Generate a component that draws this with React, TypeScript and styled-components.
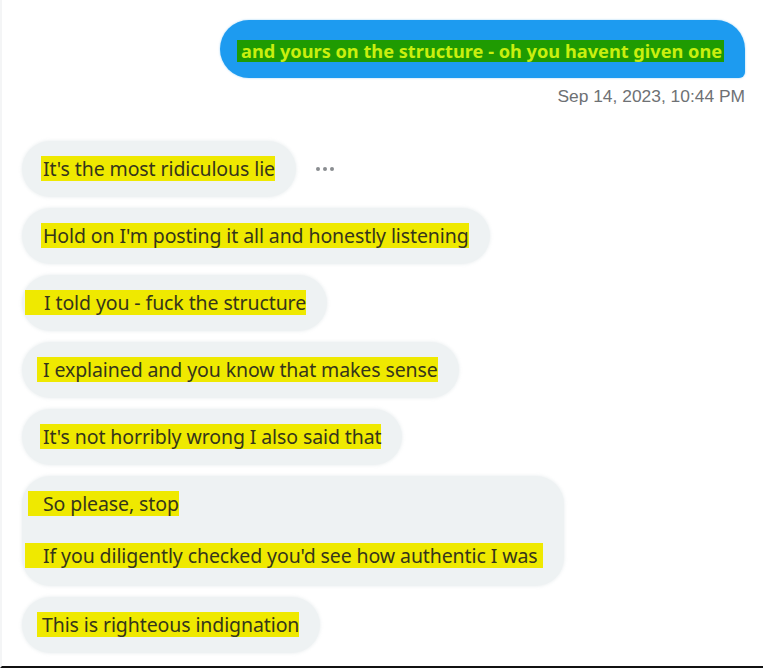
import React from "react";
import styled, { createGlobalStyle } from "styled-components";

const Global = createGlobalStyle`
  html, body { margin: 0; padding: 0; background: #ffffff; }
  body { font-family: "Noto Sans", "Liberation Sans", Arial, sans-serif; }
  * { box-sizing: border-box; }
`;

const Page = styled.div`
  width: 763px;
  height: 668px;
  background: #ffffff;
  border-left: 2px solid #f4f5f6;
  border-bottom: 2px solid #111111;
  display: flex;
  flex-direction: column;
  padding: 20px 18px 0 20px;
  overflow: hidden;
`;

const SentRow = styled.div`
  display: flex;
  justify-content: flex-end;
`;

const SentBubble = styled.div`
  background: #1d9bf0;
  border-radius: 29px 29px 6px 29px;
  padding: 20px 21px 16px 17px;
  height: 58px;
  width: 525px;
  box-shadow: 0 0 2px rgba(29, 155, 240, 0.5);
`;

const SentMark = styled.span`
  display: inline-block;
  background: #1f9b02;
  color: #c9ef0f;
  font-weight: 700;
  font-size: 18.2px;
  line-height: 22px;
  height: 22px;
  padding: 0 2px 0 4px;
  white-space: nowrap;
  letter-spacing: 0;
`;

const Timestamp = styled.div`
  text-align: right;
  color: #6e7174;
  font-family: "Liberation Sans", Arial, sans-serif;
  font-size: 17.4px;
  margin-top: 8px;
  height: 20px;
`;

const Thread = styled.div`
  display: flex;
  flex-direction: column;
  align-items: flex-start;
  gap: 11px;
  margin-top: 35px;
`;

const Row = styled.div`
  display: flex;
  align-items: center;
  gap: 19px;
`;

const Bubble = styled.div<{ $multi: boolean }>`
  background: #eef2f3;
  border-radius: 28px;
  padding: 15px 21px ${(p) => (p.$multi ? 18 : 16)}px 19px;
  display: flex;
  flex-direction: column;
  gap: 27px;
  box-shadow: 0 0 3px 1px rgba(238, 242, 243, 0.9);
`;

const Mark = styled.span<{ $shift: number; $inset: number; $tail: number }>`
  display: inline-block;
  align-self: flex-start;
  background: #efe900;
  color: #35351b;
  font-size: 19.5px;
  line-height: 25px;
  height: 25px;
  white-space: nowrap;
  margin-left: ${(p) => p.$shift}px;
  padding-left: ${(p) => p.$inset}px;
  padding-right: ${(p) => p.$tail}px;
  letter-spacing: -0.1px;
`;

const Dots = styled.svg`
  display: block;
`;

type Line = { text: string; hl: number; tx: number; tail?: number };
type Msg = { lines: Line[]; menu?: boolean };

const messages: Msg[] = [
  { lines: [{ text: "It's the most ridiculous lie", hl: 41, tx: 43 }], menu: true },
  { lines: [{ text: "Hold on I'm posting it all and honestly listening", hl: 41, tx: 43 }] },
  { lines: [{ text: "I told you - fuck the structure", hl: 25, tx: 44 }] },
  { lines: [{ text: "I explained and you know that makes sense", hl: 37, tx: 43 }] },
  { lines: [{ text: "It's not horribly wrong I also said that", hl: 40, tx: 43 }] },
  {
    lines: [
      { text: "So please, stop", hl: 28, tx: 43 },
      { text: "If you diligently checked you'd see how authentic I was", hl: 25, tx: 43, tail: 6 },
    ],
  },
  { lines: [{ text: "This is righteous indignation", hl: 37, tx: 42 }] },
];

const CONTENT_X = 41;

export default function App() {
  return (
    <>
      <Global />
      <Page>
        <SentRow>
          <SentBubble>
            <SentMark>and yours on the structure - oh you havent given one</SentMark>
          </SentBubble>
        </SentRow>
        <Timestamp>Sep 14, 2023, 10:44 PM</Timestamp>
        <Thread>
          {messages.map((m, i) => (
            <Row key={i}>
              <Bubble $multi={m.lines.length > 1}>
                {m.lines.map((l, j) => (
                  <Mark
                    key={j}
                    $shift={l.hl - CONTENT_X}
                    $inset={l.tx - l.hl}
                    $tail={l.tail ?? 0}
                  >
                    {l.text}
                  </Mark>
                ))}
              </Bubble>
              {m.menu && (
                <Dots width="20" height="6" viewBox="0 0 20 6">
                  <circle cx="3" cy="3" r="2" fill="#8a8d90" />
                  <circle cx="10" cy="3" r="2" fill="#8a8d90" />
                  <circle cx="17" cy="3" r="2" fill="#8a8d90" />
                </Dots>
              )}
            </Row>
          ))}
        </Thread>
      </Page>
    </>
  );
}
